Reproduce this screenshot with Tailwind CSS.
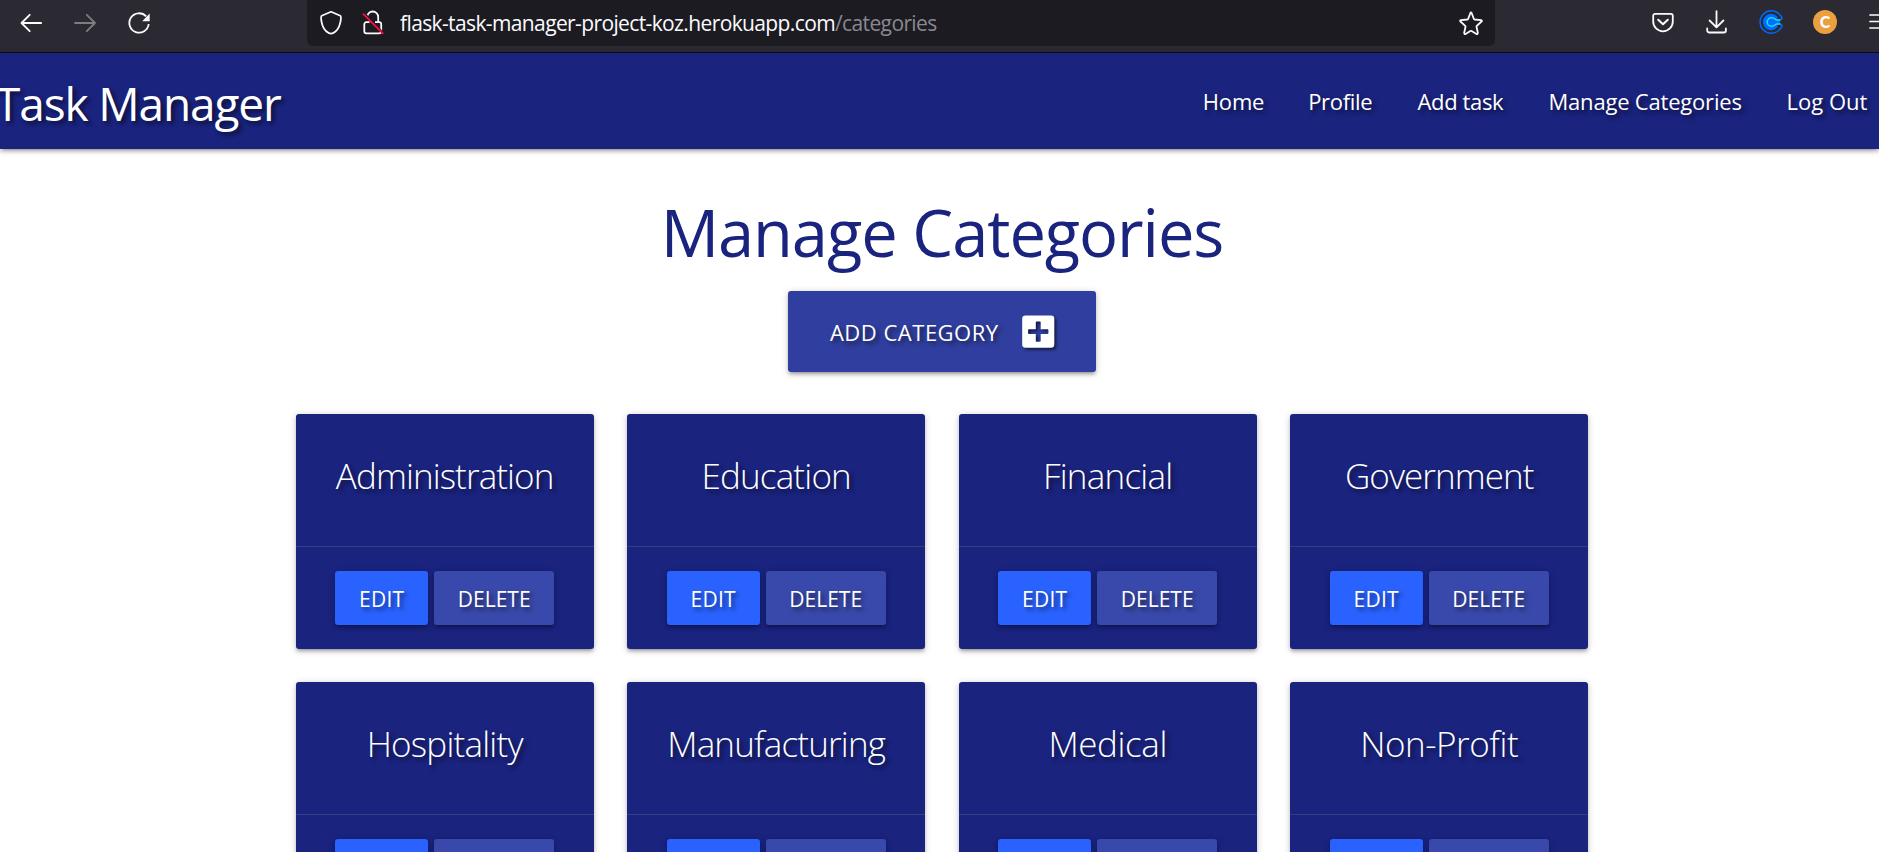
<!DOCTYPE html>
<html lang="en">
<head>
<meta charset="utf-8">
<title>Task Manager</title>
<script src="https://cdn.jsdelivr.net/npm/@tailwindcss/browser@4"></script>
</head>
<body class="h-[852px] overflow-hidden bg-white font-['Open_Sans','Noto_Sans',sans-serif]">

<!-- Browser toolbar -->
<div class="flex h-[53px] w-full overflow-hidden border-b border-[#0c0c0d] bg-[#2b2a33] text-[#fbfbfe]">
  <div class="flex h-[46px] w-[307px] shrink-0 items-center pl-[20px]">
    <svg class="h-6 w-[22px]" viewBox="0 0 22 24" fill="none" stroke="currentColor" stroke-width="1.8" stroke-linecap="round" stroke-linejoin="round"><path d="M21.200 12H1.500M9.700 3.800 1.500 12l8.200 8.200"/></svg>
    <svg class="ml-8 h-6 w-[22px] text-[#7d7c83]" viewBox="0 0 22 24" fill="none" stroke="currentColor" stroke-width="1.8" stroke-linecap="round" stroke-linejoin="round"><path d="M1 12h20M12.800 3.800 21 12l-8.200 8.200"/></svg>
    <svg class="ml-8 h-6 w-[24px]" viewBox="0 0 24 24" fill="none" stroke="currentColor" stroke-width="1.800"><path d="M18.200 5.400A9.700 9.700 0 1 0 20.700 13"/><path d="M21.700 2.600v7.700h-7.500z" fill="currentColor" stroke="none"/></svg>
  </div>
  <div class="flex h-[46px] w-[1188px] shrink-0 items-center rounded-b-[6px] bg-[#1c1b22] pl-[12px]">
    <svg class="h-[26px] w-6" viewBox="0 0 24 26" fill="none" stroke="currentColor" stroke-width="1.800" stroke-linejoin="round"><path d="M12 1.700 21.300 5.800C22.400 6.400 22 17 16.500 21.500 14.800 22.900 13.100 23.700 12 23.700S9.200 22.900 7.500 21.500C2 17 1.600 6.400 2.700 5.800Z"/></svg>
    <svg class="ml-[17px] h-[26px] w-[26px]" viewBox="0 0 26 26" fill="none" stroke="currentColor" stroke-width="1.800"><path d="M7.200 7.500V7a5.500 5.500 0 0 1 11 0V12"/><path d="M9.500 12.200H6.300a2 2 0 0 0-2 2V21.300a2 2 0 0 0 2 2H19.200a2 2 0 0 0 2-2V14.200a2 2 0 0 0-2-2H15"/><path d="M4.500 3.500 24.500 24.500" stroke="#1c1b22" stroke-width="2"/><path d="M3 3.700 23.300 23.900" stroke="#ff0f3c" stroke-width="1.800"/></svg>
    <div class="ml-[14px] whitespace-pre text-[21px] leading-[46px] tracking-[-0.62px]">flask-task-manager-project-koz.herokuapp.com<span class="text-[#8a898f]">/categories</span></div>
    <svg class="mr-[11px] ml-auto h-[26px] w-[26px]" viewBox="0 0 26 26" fill="none" stroke="currentColor" stroke-width="1.800" stroke-linejoin="round"><path d="M12.300 3.200Q13 1.800 13.700 3.200L15.900 9Q16.200 9.400 16.700 9.500L23.100 10.100Q24.500 10.500 23.500 11.500L18.800 15.800Q18.400 16.200 18.500 16.800L19.800 22.800Q19.800 24.500 18.400 23.900L13.600 21Q13 20.700 12.400 21L7.600 23.900Q6.200 24.500 6.200 22.800L7.500 16.800Q7.600 16.200 7.200 15.800L2.500 11.500Q1.500 10.500 2.900 10.100L9.300 9.500Q9.800 9.400 10.100 9Z"/></svg>
  </div>
  <div class="flex h-[44px] shrink-0 items-center pl-[156px]">
    <svg class="h-6 w-6" viewBox="0 0 24 24" fill="none" stroke="currentColor" stroke-width="1.800" stroke-linecap="round" stroke-linejoin="round"><path d="M4.200 3.900H19.800a2 2 0 0 1 2 2V11.500a9.800 9.800 0 0 1-19.600 0V5.900a2 2 0 0 1 2-2Z"/><path d="M7.200 9.700 12 14.300 16.800 9.700" stroke-width="2"/></svg>
    <svg class="ml-[29px] h-6 w-6" viewBox="0 0 24 24" fill="none" stroke="currentColor" stroke-width="1.800" stroke-linecap="round" stroke-linejoin="round"><path d="M12.500 1.200V16.500M5.600 10.500 12.500 17.300 19.400 10.500M3.200 18.500V20.500a2 2 0 0 0 2 2H19.900a2 2 0 0 0 2-2V18.500"/></svg>
    <svg class="ml-[31px] h-6 w-6" viewBox="0 0 24 24" fill="none"><path d="M20.500 4.400A11.200 11.200 0 1 0 20.500 19.600Q23.300 17.200 23 15.300L21 14.200" stroke="#006bff" stroke-width="1.400"/><path d="M20.500 4.400Q23.300 6.800 23 8.700L21 9.800" stroke="#006bff" stroke-width="1.400"/><path d="M18.500 6.900A8.200 8.200 0 1 0 18.500 17.100L18.500 14.500 21 13.500V10.500L18.500 9.500Z" fill="#006bff"/><path d="M21.500 10.100H17.600C16.300 10.100 15.900 7.700 12.500 7.700A4.300 4.300 0 0 0 12.500 16.300C15.900 16.300 16.300 13.900 17.600 13.900H21.500" stroke="#0ae8f0" stroke-width="1.500"/></svg>
    <div class="ml-[30px] flex h-6 w-6 items-center justify-center rounded-full bg-[#eb9f3f] font-['Lato'] text-[16px] leading-none font-black text-white">C</div>
    <svg class="ml-[31px] h-6 w-6" viewBox="0 0 24 24" stroke="currentColor" stroke-width="1.700" stroke-linecap="round"><path d="M2 5h20M2 11.500h20M2 18h20"/></svg>
  </div>
</div>

<!-- Site navigation -->
<nav class="flex h-[96px] w-full bg-[#1a237e] text-white shadow-[0_3px_3px_0_rgba(0,0,0,0.14),0_4.500px_1.500px_-3px_rgba(0,0,0,0.12),0_1.500px_7.500px_0_rgba(0,0,0,0.2)] [text-shadow:3px_3px_4px_rgba(0,0,0,0.55)]">
  <a class="-ml-[5px] text-[46px] leading-[101px] tracking-[-1.13px] whitespace-nowrap">Task Manager</a>
  <ul class="ml-auto flex text-[22px] leading-[97px] whitespace-nowrap">
    <li class="w-[105.4px] tracking-[-0.17px]">Home</li>
    <li class="w-[109.3px] tracking-[-0.33px]">Profile</li>
    <li class="w-[131px] tracking-[-0.37px]">Add task</li>
    <li class="w-[238px] tracking-[-0.2px]">Manage Categories</li>
    <li class="w-[92.500px]">Log Out</li>
  </ul>
</nav>

<main class="ml-[295.7px] flex w-[1292.5px] flex-col items-center pt-[44px]">
  <h1 class="text-[65px] leading-[78px] tracking-[-1.07px] text-[#1a237e]">Manage Categories</h1>
  <a class="mt-[20px] flex h-[81px] w-[308px] items-center rounded-[3px] bg-[#303f9f] pl-[42px] text-white shadow-[0_3px_3px_0_rgba(0,0,0,0.14),0_4.500px_1.500px_-3px_rgba(0,0,0,0.12),0_1.500px_7.500px_0_rgba(0,0,0,0.2)]">
    <span class="pt-[2px] text-[22px] leading-[81px] tracking-[0.5px] whitespace-nowrap [text-shadow:3px_3px_4px_rgba(0,0,0,0.55)]">ADD CATEGORY</span>
    <svg class="ml-[22px] h-[34px] w-[34px] overflow-visible [filter:drop-shadow(2px_2px_1.500px_rgba(0,0,0,0.6))]" viewBox="0 0 34 34"><path fill="#fff" fill-rule="evenodd" d="M4.500.500H30a3.300 3.300 0 0 1 3.300 3.300V29.500a3.300 3.300 0 0 1-3.300 3.300H4.500A3.300 3.300 0 0 1 1.200 29.500V3.800A3.300 3.300 0 0 1 4.500.500ZM15.600 6.500a.8.8 0 0 0-.8.8V14.300H7.900a.8.8 0 0 0-.8.8V18.200a.8.8 0 0 0 .8.8H14.800V26a.8.8 0 0 0 .8.8H18.900a.8.8 0 0 0 .8-.8V19H26.600a.8.8 0 0 0 .8-.8V15.100a.8.8 0 0 0-.8-.8H19.700V7.300a.8.8 0 0 0-.8-.8Z"/></svg>
  </a>
  <div id="cards" class="mt-[42px] grid w-full grid-cols-[repeat(4,298px)] justify-between gap-y-[33px]"></div>
</main>

<template id="card">
  <section class="h-[235px] rounded-[3px] bg-[#1a237e] text-center text-white shadow-[0_3px_3px_0_rgba(0,0,0,0.14),0_4.500px_1.500px_-3px_rgba(0,0,0,0.12),0_1.500px_7.500px_0_rgba(0,0,0,0.2)] [text-shadow:3px_3px_4px_rgba(0,0,0,0.55)]">
    <h2 class="h-[132px] pt-[37px] text-[35px] leading-[50px] font-light"></h2>
    <div class="flex justify-center gap-[6px] border-t border-[#a0a0a0]/20 pt-6">
      <a class="h-[54px] w-[93px] rounded-[3px] bg-[#2962ff] text-[21px] leading-[57px] tracking-[0.3px] shadow-[0_3px_3px_0_rgba(0,0,0,0.14),0_4.500px_1.500px_-3px_rgba(0,0,0,0.12),0_1.500px_7.500px_0_rgba(0,0,0,0.2)]">EDIT</a>
      <a class="h-[54px] w-[120px] rounded-[3px] bg-[#3949ab] text-[21px] leading-[57px] shadow-[0_3px_3px_0_rgba(0,0,0,0.14),0_4.500px_1.500px_-3px_rgba(0,0,0,0.12),0_1.500px_7.500px_0_rgba(0,0,0,0.2)]">DELETE</a>
    </div>
  </section>
</template>
<script>
  const categories = [
    ['Administration', -0.9], ['Education', -0.8], ['Financial', -0.75], ['Government', -0.95],
    ['Hospitality', -0.78], ['Manufacturing', -0.82], ['Medical', -0.4], ['Non-Profit', -0.45]
  ];
  for (const [name, tracking] of categories) {
    const card = document.getElementById('card').content.cloneNode(true);
    const title = card.querySelector('h2');
    title.textContent = name;
    title.style.letterSpacing = tracking + 'px';
    document.getElementById('cards').append(card);
  }
</script>
</body>
</html>
